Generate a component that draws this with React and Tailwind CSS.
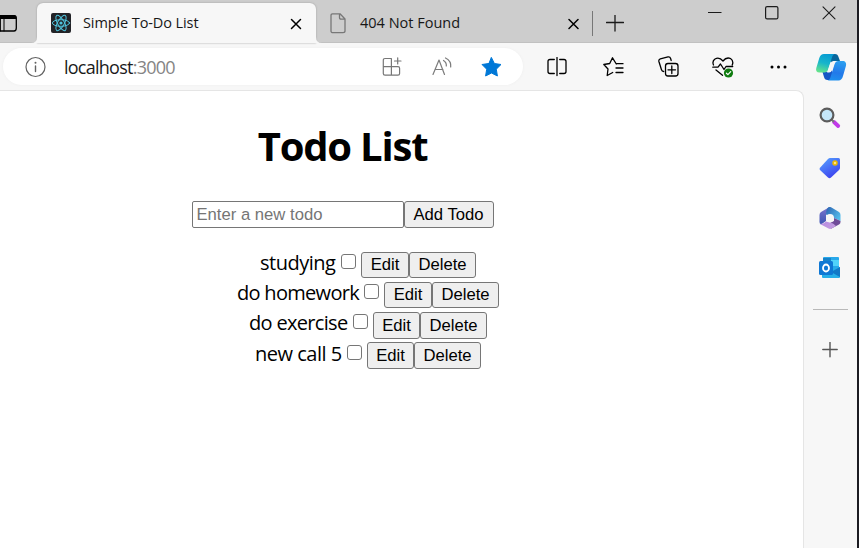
import React from "react";

const todos = [
  { text: "studying", label: "w-[76px] tracking-[-0.5px] leading-[24px]", check: "mt-[3px]", control: "h-[26px]", edit: "w-[48px]" },
  { text: "do homework", label: "w-[122px] tracking-[-0.7px] leading-[24px]", check: "mt-[3px]", control: "h-[26px]", edit: "w-[48px]" },
  { text: "do exercise", label: "w-[99px] tracking-[-0.68px] leading-[24px]", check: "mt-[3px]", control: "h-[27px]", edit: "w-[47px]" },
  { text: "new call 5", label: "w-[87px] tracking-[-0.5px] leading-[26px]", check: "mt-[4px]", control: "h-[27px]", edit: "w-[47px]" },
];

function Icon({ w = 24, h = 24, className = "", children }) {
  return (
    <svg
      width={w}
      height={h}
      viewBox={`0 0 ${w} ${h}`}
      fill="none"
      stroke="currentColor"
      strokeWidth="1.2"
      strokeLinecap="round"
      strokeLinejoin="round"
      className={`block shrink-0 ${className}`}
    >
      {children}
    </svg>
  );
}

function ReactLogo() {
  return (
    <Icon w={20} h={20} className="text-[#50c4dd]">
      <rect width="20" height="20" rx="2" fill="#222327" stroke="none" />
      <g strokeWidth="1">
        <ellipse cx="10" cy="10" rx="8.6" ry="3.3" />
        <ellipse cx="10" cy="10" rx="8.6" ry="3.3" transform="rotate(60 10 10)" />
        <ellipse cx="10" cy="10" rx="8.6" ry="3.3" transform="rotate(120 10 10)" />
      </g>
      <circle cx="10" cy="10" r="1.6" fill="currentColor" stroke="none" />
    </Icon>
  );
}

function Copilot() {
  return (
    <Icon w={32} h={28}>
      <defs>
        <linearGradient id="cpLeft" x1="0.6" y1="0" x2="0.3" y2="1">
          <stop offset="0" stopColor="#079bd3" />
          <stop offset="0.5" stopColor="#18b5cb" />
          <stop offset="1" stopColor="#64e38b" />
        </linearGradient>
        <linearGradient id="cpRight" x1="0.6" y1="0" x2="0.4" y2="1">
          <stop offset="0" stopColor="#2c9ff0" />
          <stop offset="0.6" stopColor="#2379e9" />
          <stop offset="1" stopColor="#1d8fee" />
        </linearGradient>
      </defs>
      <g stroke="none">
        <path d="M15 1h5c2 0 3 1 3.500 3L25 8h-4.500c-2 0-3 1-3.600 3L15 8z" fill="#08669c" />
        <path d="M16 27h-3.500c-2 0-3-1-3.500-3l-1.500-5H12c2 0 3-1 3.600-3L18 20z" fill="#1556c5" />
        <path d="M9 1h11c-2 .4-2.600 2-3.200 4l-3.600 11c-.7 2.600-2 3.500-4 3.500H4.500C1.600 19.500 .5 17.600 1.300 15L4.300 5C5.200 2.400 6.600 1 9 1z" fill="url(#cpLeft)" />
        <path d="M23.500 27.500H12.500c2-.4 2.600-2 3.200-4l3.600-11.500c.7-2.600 2-4 4-4h4.200c2.900 0 4.200 2 3.400 5l-2.900 10c-.8 2.900-2.200 4.500-4.500 4.500z" fill="url(#cpRight)" />
        <path d="M15.300 10.500Q16 8 18.500 8H20.500Q19.700 9 19.300 10.500L17 17Q16.200 19.500 14 19.500H12Q12.800 18.700 13.200 17z" fill="#f7f7f7" />
      </g>
    </Icon>
  );
}

function TabBar() {
  return (
    <div className="flex h-[43px] shrink-0 border-b border-[#c1c1c1] bg-[#cdcdcd] text-[14.5px] leading-5 text-[#171717]">
      <div className="w-[37px] shrink-0 pt-3.5">
        <Icon w={18} h={18} className="text-black">
          <path d="M-2 1.600H14Q16.300 1.600 16.300 4V14Q16.300 17 14 17H-2" strokeWidth="1.3" />
          <path d="M0 1H14Q16.500 1 16.500 5H0z" fill="currentColor" stroke="none" />
          <path d="M4 5v12M.4 5v12" strokeWidth="1" />
        </Icon>
      </div>
      <div className="relative mt-[3px] flex h-10 w-[279px] shrink-0 rounded-t-md bg-[#f7f7f7] pl-3.5 shadow-[0_0_2px_#999]">
        <div className="pt-2.5"><ReactLogo /></div>
        <span className="ml-3 w-[117px] whitespace-nowrap pt-2.5 font-['Open_Sans',sans-serif] tracking-[-0.1px]">Simple To-Do List</span>
        <Icon w={12} h={12} className="ml-[90px] mt-[15px] text-black">
          <path d="M1.500 1.500l9 9M10.500 1.500l-9 9" strokeWidth="1.5" />
        </Icon>
        <Icon w={6} h={6} className="absolute -left-1.5 bottom-0">
          <path d="M6 0Q6 6 0 6H6z" fill="#f7f7f7" stroke="none" />
        </Icon>
        <Icon w={6} h={6} className="absolute -right-1.5 bottom-0">
          <path d="M0 0Q0 6 6 6H0z" fill="#f7f7f7" stroke="none" />
        </Icon>
      </div>
      <div className="flex pl-3.5 pt-[13px]">
        <Icon w={16} h={21} className="text-[#777]">
          <path d="M2.500.8H10L15 6V18Q15 19.600 13 19.600H3Q1 19.600 1 18V2.500Q1 .8 2.500.8zM9.500 1V4.500Q9.500 6.200 11 6.200H15" strokeWidth="1.3" />
        </Icon>
        <span className="ml-[14px] w-[100px] whitespace-nowrap font-['Open_Sans',sans-serif]">404 Not Found</span>
        <Icon w={12} h={12} className="ml-[107px] mt-[5px] text-black">
          <path d="M2 1.500l9 9M11 1.500l-9 9" strokeWidth="1.5" />
        </Icon>
        <div className="ml-[13px] -mt-0.5 h-[25px] w-px bg-[#777]" />
        <Icon w={18} h={18} className="ml-[13px] mt-0.5 text-[#1b1b1b]">
          <path d="M.5 7.500h17M9 -.5v16.500" strokeWidth="1.3" />
        </Icon>
      </div>
      <div className="ml-auto flex gap-[43px] pr-[21px] pt-1.5 text-[#1b1b1b]">
        <Icon w={14} h={14}><path d="M0 6.500h13.500" strokeWidth="1" strokeLinecap="butt" /></Icon>
        <Icon w={14} h={14}><rect x=".6" y=".6" width="12.300" height="12.300" rx="1.500" /></Icon>
        <Icon w={14} h={14}><path d="M1 .8l12 12M13 .8l-12 12" strokeWidth="1.1" /></Icon>
      </div>
    </div>
  );
}

function Toolbar() {
  return (
    <div className="flex h-[47px] shrink-0 items-center bg-[#f7f7f7] pl-[3px]">
      <div className="flex h-[37px] w-[520px] shrink-0 items-center rounded-full bg-white pl-[22px] shadow-[0_0_3px_#eee]">
        <Icon w={22} h={22} className="text-[#626262]">
          <circle cx="10.500" cy="11" r="9.500" strokeWidth="1.2" />
          <path d="M10.500 10v5.500" strokeWidth="1.4" />
          <circle cx="10.500" cy="6.800" r="1" fill="currentColor" stroke="none" />
        </Icon>
        <span className="ml-[17px] w-[113px] whitespace-nowrap font-['Open_Sans',sans-serif] text-[18px] leading-6 tracking-[-0.75px] text-[#1b1b1b]">
          localhost<span className="text-[#858585]">:3000</span>
        </span>
        <Icon w={20} h={20} className="ml-[205px] text-[#777]">
          <path d="M8.800 1.500H3Q1.300 1.500 1.300 3.200V16.500Q1.300 18.200 3 18.200H16Q17.600 18.200 17.600 16.500V11.200Q17.600 9.700 16 9.700H1.300M9.400 1.500V18M15.700 .8V7M12.500 4h6.500" />
        </Icon>
        <Icon w={22} h={20} className="ml-[30px] text-[#7c7c7c]">
          <path d="M1 17.500L7 3L12.500 17.500M3.300 12.500H11M11.500 3.500Q14.700 5.500 14.300 9M13.500 1Q19.500 4 18.700 10" />
        </Icon>
        <Icon w={22} h={22} className="ml-[27px]">
          <path d="M10.500 1.700L13.400 7.500L20 8.500L15.300 13.200L16.400 20L10.500 17L4.600 20L5.700 13.200L1 8.500L7.600 7.500z" fill="#0078d7" stroke="#0078d7" strokeWidth="1" />
        </Icon>
      </div>
      <div className="flex items-center text-black">
        <Icon w={20} h={20} className="ml-[24px]">
          <path d="M7.300 2.500H3Q1 2.500 1 4.500V14.500Q1 16.500 3 16.500H7.300M12.700 2.500H17Q19 2.500 19 4.500V14.500Q19 16.500 17 16.500H12.700M10 .5V18.500" strokeWidth="1.3" />
        </Icon>
        <Icon w={22} h={20} className="ml-[36px]">
          <path d="M13.300 7L9.500.8L6.700 6.500L.8 7.500L5 12L4.200 18.500L9.700 15.500M13.500 6.700H20M13 11H20M13 15.500H20" strokeWidth="1.3" />
        </Icon>
        <Icon w={22} h={22} className="ml-[33px]">
          <rect x="7.500" y="7.500" width="12.500" height="12.500" rx="2.500" strokeWidth="1.3" />
          <path d="M13.800 10v7.500M10 13.800h7.500M5.700 15.500Q4 15.500 3.400 13.500L.9 5.500Q.5 3.500 2.300 2.900L10 .9Q12 .5 12.600 2.500L13.200 4.500" strokeWidth="1.3" />
        </Icon>
        <Icon w={24} h={22} className="ml-[32px]">
          <path d="M1.500 9Q-.1 5.200 3 3Q7.300 .7 11 5Q14.300 .7 18.500 2.500Q22 5 20.200 9M.8 11.200H6L8.500 8L12 13.500L14 10.500H20.700M4 14L10.500 19.300" strokeWidth="1.3" />
          <circle cx="16.500" cy="17" r="4.600" fill="#107c10" stroke="none" />
          <path d="M14.400 17.200l1.500 1.400 2.800-3" stroke="white" />
        </Icon>
        <Icon w={18} h={6} className="ml-[33px]">
          <g fill="currentColor" stroke="none"><circle cx="3" cy="3" r="1.500" /><circle cx="9.500" cy="3" r="1.500" /><circle cx="16" cy="3" r="1.500" /></g>
        </Icon>
        <div className="ml-[28px]"><Copilot /></div>
      </div>
    </div>
  );
}

function Sidebar() {
  return (
    <div className="flex w-[53px] shrink-0 flex-col items-center bg-[#f7f7f7] pr-0.5 pt-[17px]">
      <Icon w={22} h={22}>
        <path d="M15 15l4.200 4" stroke="#c239e9" strokeWidth="3.8" />
        <path d="M12.500 12.500l2 2" stroke="#777" strokeWidth="2" />
        <circle cx="8" cy="8" r="6.400" fill="#c5e7fa" stroke="#5c5c5c" strokeWidth="2.200" />
      </Icon>
      <Icon w={22} h={22} className="mt-[28px]">
        <defs><linearGradient id="tagFill" x1="0" y1="0" x2=".6" y2="1"><stop stopColor="#57a6ff" /><stop offset="1" stopColor="#3d43ef" /></linearGradient></defs>
        <path d="M11 1h8.500Q21 1 21 2.500V11Q21 12 20 13L12 20.500Q10.500 21.800 9 20.500L1 13Q0 12 1 10.800L9 2Q10 1 11 1z" fill="url(#tagFill)" stroke="none" />
        <circle cx="16" cy="6" r="2" fill="#ffe184" stroke="#ecb900" strokeWidth="1.5" />
      </Icon>
      <Icon w={22} h={22} className="mt-[28px]">
        <defs>
          <linearGradient id="hexLeft" x1="0" y1="0" x2="0" y2="1"><stop stopColor="#7d75cd" /><stop offset="1" stopColor="#3c56b2" /></linearGradient>
          <linearGradient id="hexTop" x1="0" y1="0" x2="1" y2=".7"><stop stopColor="#2c62b0" /><stop offset="1" stopColor="#54bdeb" /></linearGradient>
          <linearGradient id="hexBottom" x1="0" y1="0" x2="1" y2=".4"><stop stopColor="#b58be0" /><stop offset="1" stopColor="#c39be0" /></linearGradient>
        </defs>
        <g stroke="none">
          <path d="M10.500 0L2 5Q.5 6 .5 8V15Q.5 16.500 2 17.500L7 14V8Q7 5 10.500 3z" fill="url(#hexLeft)" />
          <path d="M9.500 .3Q11-.4 12.500 .4L20 5Q21.500 6 21.500 8V14L15 11L7 7.500Q7 2 9.500 .3z" fill="url(#hexTop)" />
          <path d="M15 11L21.500 14V15Q21.500 16.500 20 17.500L12 21.700L9 17L15 14z" fill="#704b98" />
          <path d="M1 16.500Q4 17.500 7 14.500L14 16.500L17 19L12.500 21.600Q11 22.300 9.500 21.600L2 17.500z" fill="url(#hexBottom)" />
          <circle cx="11" cy="11" r="4" fill="#f7f7f7" />
        </g>
      </Icon>
      <Icon w={22} h={22} className="mt-[28px]">
        <g stroke="none">
          <path d="M5 0h14q1 0 1 1v14H4V1q0-1 1-1z" fill="#28a8ea" />
          <path d="M4 1h8v7H4z" fill="#1683ca" /><path d="M12 3h8v6h-8z" fill="#50d3fa" />
          <path d="M3 13L21 10v10q0 1-1 1H4q-1 0-1-1z" fill="#27afe8" />
          <path d="M21 10v10L12 15z" fill="#1279c7" />
          <rect x="0" y="4" width="14" height="14" rx="1.500" fill="#0f78d4" />
        </g>
        <ellipse cx="7" cy="11" rx="3" ry="3.500" stroke="white" strokeWidth="1.800" />
      </Icon>
      <div className="ml-0.5 mt-[30px] h-px w-[35px] bg-[#b9b9b9]" />
      <Icon w={16} h={16} className="mt-8 text-[#555]"><path d="M.8 7.500h14.400M8 .3v14.400" strokeWidth="1.4" /></Icon>
    </div>
  );
}

const button = "box-border shrink-0 rounded-[3px] border border-[#767676] bg-[#efefef] text-center font-['Liberation_Sans',Arial,sans-serif] text-[16.67px] leading-[24px] text-black whitespace-nowrap";

function TodoPage() {
  return (
    <main className="flex w-[804px] shrink-0 flex-col rounded-tr-lg border-r border-t border-[#e5e5e5] bg-white pr-[118px] text-black">
      <h1 className="mt-[27px] text-center font-['Open_Sans',sans-serif] text-[40px] font-bold leading-[56px] tracking-[-1.2px]">Todo List</h1>
      <div className="mt-[27px] flex justify-center">
        <input className="box-border h-[27px] w-[212px] rounded-[2px] border border-[#767676] px-1 font-['Liberation_Sans',Arial,sans-serif] text-[16.67px] placeholder:text-[#757575]" placeholder="Enter a new todo" />
        <button className={`${button} h-[27px] w-[90px]`}>Add Todo</button>
      </div>
      <ul className="mt-[23px] flex flex-col pl-[51px]">
        {todos.map((t) => (
          <li key={t.text} className="flex h-[30px] items-start justify-center">
            <span className={`${t.label} shrink-0 whitespace-nowrap font-['Open_Sans',sans-serif] text-[20px]`}>{t.text}</span>
            <input type="checkbox" aria-label={t.text} className={`${t.check} ml-[5px] mr-[5px] h-[15px] w-[15px] shrink-0 appearance-none rounded-[3px] border border-[#767676] bg-white`} />
            <button className={`${button} ${t.control} ${t.edit} mt-px`}>Edit</button>
            <button className={`${button} ${t.control} mt-px w-[67px]`}>Delete</button>
          </li>
        ))}
      </ul>
    </main>
  );
}

export default function App() {
  return (
    <div className="flex h-[548px] w-[859px] overflow-hidden bg-[#f7f7f7]">
      <div className="flex w-[857px] shrink-0 flex-col">
        <TabBar />
        <Toolbar />
        <div className="flex min-h-0 flex-1">
          <TodoPage />
          <Sidebar />
        </div>
      </div>
      <div className="w-0.5 shrink-0 bg-[#1c1c22]" />
    </div>
  );
}
